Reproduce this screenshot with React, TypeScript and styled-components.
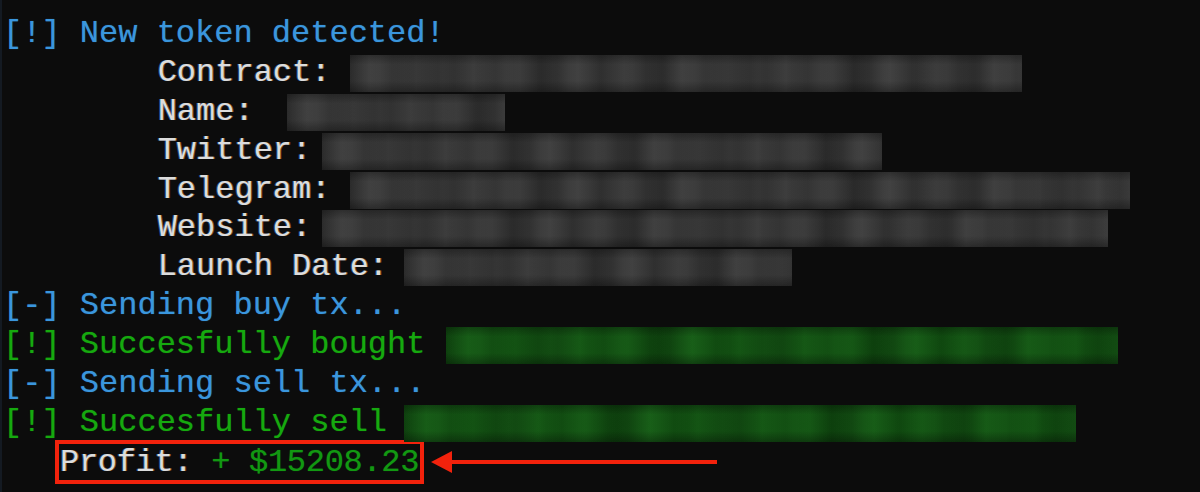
import React from "react";
import styled, { createGlobalStyle, css } from "styled-components";

const GlobalStyle = createGlobalStyle`
  html, body {
    margin: 0;
    padding: 0;
    background: #0c0c0c;
  }
  #root {
    width: 1200px;
    height: 492px;
  }
`;

type Tone = "blue" | "green" | "label" | "profit";

const toneStyles: Record<Tone, ReturnType<typeof css>> = {
  blue: css`
    color: #3a96dd;
    text-shadow: 0 0 1px rgba(58, 150, 221, 0.6);
  `,
  green: css`
    color: #16a90f;
    text-shadow: 0 0 1px rgba(22, 169, 15, 0.6);
  `,
  profit: css`
    color: #129812;
    text-shadow: 0 0 1px rgba(18, 152, 18, 0.6);
  `,
  label: css`
    color: #dcdcdc;
    text-shadow: -1px 0 0 rgba(60, 130, 220, 0.55), 1px 0 0 rgba(225, 140, 50, 0.55);
  `,
};

const Terminal = styled.div`
  box-sizing: border-box;
  width: 1200px;
  height: 492px;
  overflow: hidden;
  background: #0c0c0c;
  border-left: 2px solid #141a22;
  padding: 15px 0 0 0;
  font-family: "Liberation Mono", "DejaVu Sans Mono", monospace;
  font-size: 32px;
  display: flex;
  flex-direction: column;
`;

const Line = styled.div<{ $tone: Tone; $indent?: number }>`
  display: flex;
  align-items: center;
  height: 38.9px;
  white-space: pre;
  line-height: 38.9px;
  padding-left: ${(p) => p.$indent ?? 0}px;
  ${(p) => toneStyles[p.$tone]}
`;

const Text = styled.span<{ $tone: Tone }>`
  ${(p) => toneStyles[p.$tone]}
`;

const shade = `linear-gradient(
  180deg,
  rgba(0, 0, 0, 0.28) 0%,
  rgba(0, 0, 0, 0) 26%,
  rgba(0, 0, 0, 0) 70%,
  rgba(0, 0, 0, 0.32) 100%
)`;

const Redacted = styled.div<{ $green?: boolean; $offset: number; $width: number }>`
  flex: none;
  height: 37px;
  margin-left: ${(p) => p.$offset}px;
  width: ${(p) => p.$width}px;
  filter: blur(0.6px);
  ${(p) =>
    p.$green
      ? css`
          background-color: #0f450f;
          background-image: ${shade},
            repeating-linear-gradient(
              90deg,
              rgba(40, 120, 40, 0) 0px,
              rgba(40, 130, 40, 0.18) 34px,
              rgba(40, 120, 40, 0) 71px
            ),
            repeating-linear-gradient(
              90deg,
              #0e400e 0px,
              #155715 22px,
              #0f470f 46px,
              #135213 70px,
              #0d3f0d 92px,
              #0e400e 112px
            );
        `
      : css`
          background-color: #333;
          background-image: ${shade},
            repeating-linear-gradient(
              90deg,
              rgba(90, 90, 90, 0) 0px,
              rgba(90, 90, 90, 0.22) 30px,
              rgba(90, 90, 90, 0) 63px
            ),
            repeating-linear-gradient(
              90deg,
              #2b2b2b 0px,
              #3c3c3c 20px,
              #2f2f2f 42px,
              #373737 66px,
              #2a2a2a 88px,
              #2b2b2b 104px
            );
        `}
`;

const ProfitRow = styled.div`
  display: flex;
  align-items: center;
  height: 38.9px;
  padding-left: 53px;
  white-space: pre;
`;

const ProfitBox = styled.div`
  flex: none;
  box-sizing: border-box;
  height: 44px;
  display: flex;
  align-items: center;
  border: 4px solid #f2220c;
  padding: 0 1px;
  letter-spacing: -0.3px;
`;

const Arrow = styled.svg`
  flex: none;
  margin-left: 7px;
  display: block;
`;

const fields: { label: string; offset: number; width: number }[] = [
  { label: "Contract:", offset: 20, width: 672 },
  { label: "Name:", offset: 33, width: 218 },
  { label: "Twitter:", offset: 11, width: 560 },
  { label: "Telegram:", offset: 20, width: 780 },
  { label: "Website:", offset: 11, width: 786 },
  { label: "Launch Date:", offset: 16, width: 388 },
];

export default function App() {
  return (
    <>
      <GlobalStyle />
      <Terminal>
        <Line $tone="blue" $indent={1}>[!] New token detected!</Line>
        {fields.map((f) => (
          <Line key={f.label} $tone="label" $indent={2}>
            <Text $tone="label">{"        " + f.label}</Text>
            <Redacted $offset={f.offset} $width={f.width} />
          </Line>
        ))}
        <Line $tone="blue" $indent={1}>[-] Sending buy tx...</Line>
        <Line $tone="green" $indent={1}>
          <span>[!] Succesfully bought</span>
          <Redacted $green $offset={21} $width={672} />
        </Line>
        <Line $tone="blue" $indent={1}>[-] Sending sell tx...</Line>
        <Line $tone="green" $indent={1}>
          <span>[!] Succesfully sell</span>
          <Redacted $green $offset={17} $width={672} />
        </Line>
        <ProfitRow>
          <ProfitBox>
            <Text $tone="label">Profit:</Text>
            <Text $tone="profit"> + $15208.23</Text>
          </ProfitBox>
          <Arrow width="286" height="24" viewBox="0 0 286 24">
            <polygon points="0,12 21,1 21,23" fill="#f2220c" />
            <rect x="20" y="10" width="266" height="4" fill="#f2220c" />
          </Arrow>
        </ProfitRow>
      </Terminal>
    </>
  );
}
